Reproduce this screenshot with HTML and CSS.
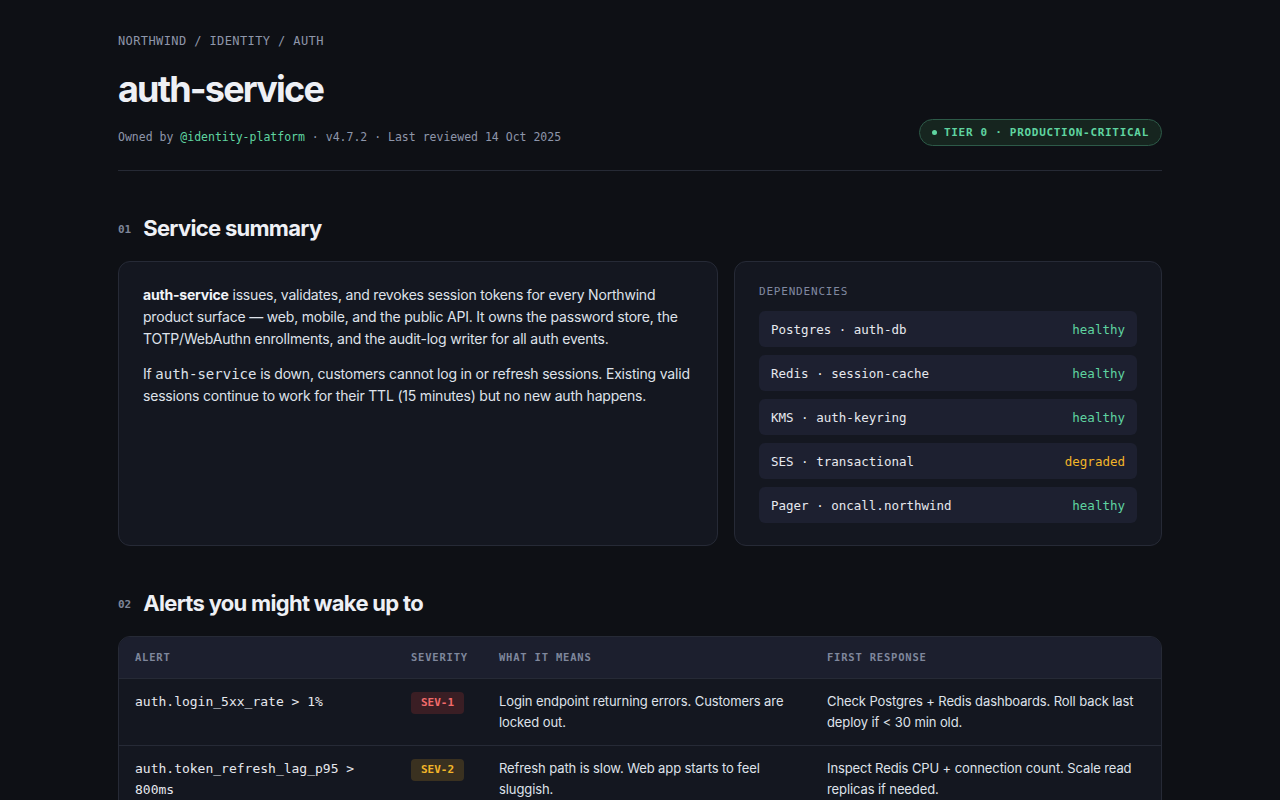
FILE: index.html
```html
<!DOCTYPE html>
<html lang="en">
<head>
<meta charset="UTF-8">
<meta name="viewport" content="width=device-width, initial-scale=1.0">
<title>auth-service</title>
<link rel="stylesheet" href="styles.css">
</head>
<body>
<div class="page">
  <header class="header">
    <div class="crumbs">NORTHWIND / IDENTITY / AUTH</div>
    <div class="header-row">
      <div>
        <h1 class="title">auth-service</h1>
        <div class="meta">Owned by <span class="owner">@identity-platform</span> · v4.7.2 · Last reviewed 14 Oct 2025</div>
      </div>
      <div class="tier"><span class="dot"></span>TIER 0 · PRODUCTION-CRITICAL</div>
    </div>
  </header>

  <section class="section">
    <h2 class="section-title"><span class="num">01</span>Service summary</h2>
    <div class="summary">
      <div class="card about">
        <p><strong>auth-service</strong> issues, validates, and revokes session tokens for every Northwind product surface — web, mobile, and the public API. It owns the password store, the TOTP/WebAuthn enrollments, and the audit-log writer for all auth events.</p>
        <p>If <code>auth-service</code> is down, customers cannot log in or refresh sessions. Existing valid sessions continue to work for their TTL (15 minutes) but no new auth happens.</p>
      </div>
      <div class="card deps">
        <div class="label">DEPENDENCIES</div>
        <div class="dep-list">
          <div class="dep"><span>Postgres · auth-db</span><span class="ok">healthy</span></div>
          <div class="dep"><span>Redis · session-cache</span><span class="ok">healthy</span></div>
          <div class="dep"><span>KMS · auth-keyring</span><span class="ok">healthy</span></div>
          <div class="dep"><span>SES · transactional</span><span class="warn">degraded</span></div>
          <div class="dep"><span>Pager · oncall.northwind</span><span class="ok">healthy</span></div>
        </div>
      </div>
    </div>
  </section>

  <section class="section">
    <h2 class="section-title"><span class="num">02</span>Alerts you might wake up to</h2>
    <div class="table-wrap">
      <table class="alerts">
        <colgroup>
          <col class="c-alert">
          <col class="c-sev">
          <col class="c-means">
          <col class="c-resp">
        </colgroup>
        <thead>
          <tr><th>ALERT</th><th>SEVERITY</th><th>WHAT IT MEANS</th><th>FIRST RESPONSE</th></tr>
        </thead>
        <tbody>
          <tr>
            <td class="code">auth.login_5xx_rate &gt; 1%</td>
            <td><span class="sev sev1">SEV-1</span></td>
            <td>Login endpoint returning errors. Customers are locked out.</td>
            <td>Check Postgres + Redis dashboards. Roll back last deploy if &lt; 30 min old.</td>
          </tr>
          <tr>
            <td class="code">auth.token_refresh_lag_p95 &gt; 800ms</td>
            <td><span class="sev sev2">SEV-2</span></td>
            <td>Refresh path is slow. Web app starts to feel sluggish.</td>
            <td>Inspect Redis CPU + connection count. Scale read replicas if needed.</td>
          </tr>
          <tr>
            <td class="code">auth.kms_decrypt_errors &gt; 0</td>
            <td><span class="sev sev1">SEV-1</span></td>
            <td>Tokens can't be signed or verified. Logins fail.</td>
            <td>Check KMS key status and IAM role. Page security on-call.</td>
          </tr>
        </tbody>
      </table>
    </div>
  </section>
</div>
</body>
</html>
```

FILE: styles.css
```css
body {
    margin: 0;
    background: #0e1015;
    color: #e6e8ee;
    font-family: Inter, "Noto Sans", sans-serif;
}
.page {
    width: 1044px;
    margin: 0 auto;
    padding: 32px 0 60px;
}
.header {
    border-bottom: 1px solid #262a35;
    padding-bottom: 24px;
}
.crumbs {
    font-family: "DejaVu Sans Mono", monospace;
    font-size: 12px;
    line-height: 18px;
    color: #8e96aa;
    letter-spacing: 0.4px;
}
.header-row {
    display: flex;
    justify-content: space-between;
    align-items: flex-end;
}
.title {
    margin: 18px 0 17px;
    font-size: 36px;
    line-height: 43px;
    font-weight: 700;
    letter-spacing: -1.8px;
    color: #eef0f5;
}
.meta {
    font-family: "DejaVu Sans Mono", monospace;
    font-size: 11.5px;
    line-height: 18px;
    color: #8e96aa;
}
.owner {
    color: #5fd4a0;
}
.tier {
    display: flex;
    align-items: center;
    gap: 7px;
    height: 27px;
    box-sizing: border-box;
    padding: 0 12px;
    margin-bottom: 0;
    border: 1px solid #2d5a48;
    background: #16251f;
    border-radius: 14px;
    font-family: "DejaVu Sans Mono", monospace;
    font-size: 11px;
    font-weight: 700;
    letter-spacing: 0.7px;
    color: #5fd4a0;
}
.tier .dot {
    width: 5px;
    height: 5px;
    border-radius: 50%;
    background: #5fd4a0;
}
.section {
    margin-top: 43px;
}
.section-title {
    display: flex;
    align-items: center;
    gap: 12px;
    margin: 0 0 19px;
    font-size: 22px;
    line-height: 28px;
    font-weight: 700;
    letter-spacing: -0.7px;
    color: #eef0f5;
}
.section-title .num {
    font-family: "DejaVu Sans Mono", monospace;
    font-size: 11px;
    line-height: 14px;
    font-weight: 700;
    letter-spacing: 0;
    color: #7d8598;
    padding-top: 3px;
}
.summary {
    display: flex;
    gap: 16px;
}
.card {
    background: #141720;
    border: 1px solid #262a36;
    border-radius: 12px;
    padding: 22px 24px;
}
.about {
    width: 600px;
    box-sizing: border-box;
}
.about p {
    margin: 0 0 13px;
    font-size: 14px;
    line-height: 22px;
    letter-spacing: -0.2px;
    color: #dfe2ea;
}
.about strong {
    color: #f2f4f8;
}
.about code {
    font-family: "DejaVu Sans Mono", monospace;
    font-size: 14px;
    letter-spacing: 0;
}
.deps {
    flex: 1;
}
.label {
    font-family: "DejaVu Sans Mono", monospace;
    font-size: 11px;
    line-height: 16px;
    letter-spacing: 0.8px;
    color: #8089a0;
    margin-bottom: 11px;
}
.dep-list {
    display: flex;
    flex-direction: column;
    gap: 8px;
}
.dep {
    display: flex;
    justify-content: space-between;
    align-items: center;
    height: 36px;
    padding: 0 12px;
    background: #1d2030;
    border-radius: 6px;
    font-family: "DejaVu Sans Mono", monospace;
    font-size: 12.5px;
    color: #e6e8ee;
}
.ok {
    color: #5fd4a0;
}
.warn {
    color: #f2b529;
}
.table-wrap {
    border: 1px solid #262a36;
    border-radius: 12px;
    overflow: hidden;
    background: #141720;
}
.alerts {
    width: 100%;
    border-collapse: collapse;
    table-layout: fixed;
}
.c-alert { width: 276px; }
.c-sev { width: 88px; }
.c-means { width: 328px; }
.alerts th {
    background: #1c1f2e;
    text-align: left;
    padding: 13px 16px 14px;
    font-family: "DejaVu Sans Mono", monospace;
    font-size: 10.5px;
    line-height: 14px;
    font-weight: 700;
    letter-spacing: 0.8px;
    color: #7f879c;
    border-bottom: 1px solid #262a36;
}
.alerts td {
    padding: 12px 16px;
    vertical-align: top;
    font-size: 13px;
    line-height: 21px;
    letter-spacing: -0.1px;
    color: #dfe2ea;
    border-bottom: 1px solid #262a36;
}
.alerts td.code {
    font-family: "DejaVu Sans Mono", monospace;
    font-size: 13px;
    letter-spacing: 0;
    color: #e6e8ee;
}
.sev {
    display: inline-block;
    height: 22px;
    line-height: 22px;
    padding: 0 10px;
    border-radius: 4px;
    font-family: "DejaVu Sans Mono", monospace;
    font-size: 11px;
    font-weight: 700;
    letter-spacing: 0;
}
.sev1 {
    background: #3a1e24;
    color: #f26b6b;
}
.sev2 {
    background: #3a3120;
    color: #f2b529;
}
```
